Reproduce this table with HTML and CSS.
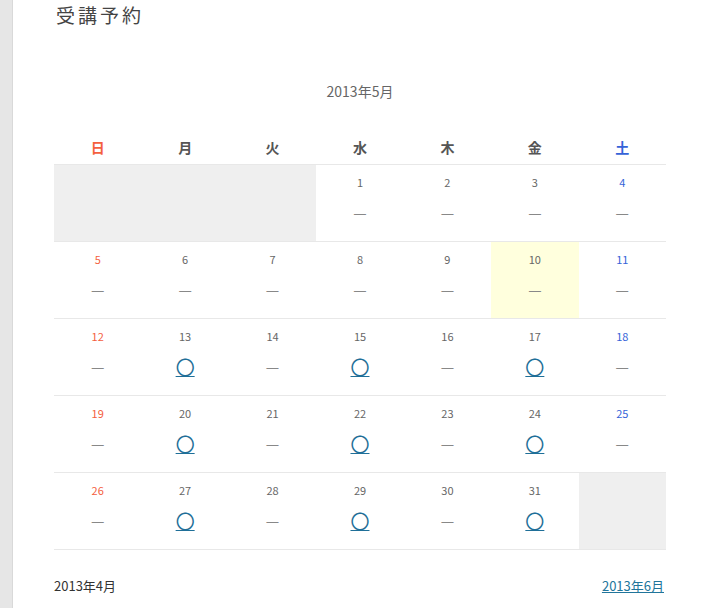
FILE: index.html
```html
<!DOCTYPE html>
<html lang="ja">
<head>
<meta charset="utf-8">
<title>受講予約</title>
<link rel="stylesheet" href="styles.css">
</head>
<body>
<div class="sidebar"></div>
<main class="main">
  <h1 class="title">受講予約</h1>
  <div class="caption">2013年5月</div>
  <div class="cal">
    <div class="wd sun">日</div>
    <div class="wd">月</div>
    <div class="wd">火</div>
    <div class="wd">水</div>
    <div class="wd">木</div>
    <div class="wd">金</div>
    <div class="wd sat">土</div>

    <div class="day empty"></div>
    <div class="day empty"></div>
    <div class="day empty"></div>
    <div class="day"><div class="num">1</div><div class="mark">—</div></div>
    <div class="day"><div class="num">2</div><div class="mark">—</div></div>
    <div class="day"><div class="num">3</div><div class="mark">—</div></div>
    <div class="day sat"><div class="num">4</div><div class="mark">—</div></div>

    <div class="day sun"><div class="num">5</div><div class="mark">—</div></div>
    <div class="day"><div class="num">6</div><div class="mark">—</div></div>
    <div class="day"><div class="num">7</div><div class="mark">—</div></div>
    <div class="day"><div class="num">8</div><div class="mark">—</div></div>
    <div class="day"><div class="num">9</div><div class="mark">—</div></div>
    <div class="day today"><div class="num">10</div><div class="mark">—</div></div>
    <div class="day sat"><div class="num">11</div><div class="mark">—</div></div>

    <div class="day sun"><div class="num">12</div><div class="mark">—</div></div>
    <div class="day"><div class="num">13</div><div class="mark"><a class="ok" href="#">〇</a></div></div>
    <div class="day"><div class="num">14</div><div class="mark">—</div></div>
    <div class="day"><div class="num">15</div><div class="mark"><a class="ok" href="#">〇</a></div></div>
    <div class="day"><div class="num">16</div><div class="mark">—</div></div>
    <div class="day"><div class="num">17</div><div class="mark"><a class="ok" href="#">〇</a></div></div>
    <div class="day sat"><div class="num">18</div><div class="mark">—</div></div>

    <div class="day sun"><div class="num">19</div><div class="mark">—</div></div>
    <div class="day"><div class="num">20</div><div class="mark"><a class="ok" href="#">〇</a></div></div>
    <div class="day"><div class="num">21</div><div class="mark">—</div></div>
    <div class="day"><div class="num">22</div><div class="mark"><a class="ok" href="#">〇</a></div></div>
    <div class="day"><div class="num">23</div><div class="mark">—</div></div>
    <div class="day"><div class="num">24</div><div class="mark"><a class="ok" href="#">〇</a></div></div>
    <div class="day sat"><div class="num">25</div><div class="mark">—</div></div>

    <div class="day sun"><div class="num">26</div><div class="mark">—</div></div>
    <div class="day"><div class="num">27</div><div class="mark"><a class="ok" href="#">〇</a></div></div>
    <div class="day"><div class="num">28</div><div class="mark">—</div></div>
    <div class="day"><div class="num">29</div><div class="mark"><a class="ok" href="#">〇</a></div></div>
    <div class="day"><div class="num">30</div><div class="mark">—</div></div>
    <div class="day"><div class="num">31</div><div class="mark"><a class="ok" href="#">〇</a></div></div>
    <div class="day empty"></div>
  </div>
  <div class="pager">
    <span class="prev">2013年4月</span>
    <a class="next" href="#">2013年6月</a>
  </div>
</main>
</body>
</html>
```

FILE: styles.css
```css
html, body {
  margin: 0;
  padding: 0;
  background: #fff;
}
body {
  display: flex;
  min-height: 608px;
  font-family: "Noto Sans CJK JP", "Noto Sans", sans-serif;
  color: #444;
}
.sidebar {
  width: 12px;
  background: #e6e6e6;
  border-right: 1px solid #d9d9d9;
  flex: none;
}
.main {
  width: 612px;
  padding: 0 42px 0 41px;
}
.title {
  margin: 0;
  padding-left: 2px;
  font-size: 19px;
  font-weight: normal;
  line-height: 30px;
  letter-spacing: 3px;
  color: #444;
}
.caption {
  margin-top: 51px;
  line-height: 20px;
  font-size: 14px;
  text-align: center;
  color: #666;
}
.cal {
  margin-top: 30px;
  display: grid;
  grid-template-columns: repeat(7, 1fr);
}
.wd {
  height: 32px;
  padding-bottom: 1px;
  border-bottom: 1px solid #e8e8e8;
  display: flex;
  align-items: center;
  justify-content: center;
  font-size: 14px;
  font-weight: bold;
  color: #555;
}
.day {
  height: 76px;
  border-bottom: 1px solid #e8e8e8;
  text-align: center;
  color: #666;
}
.day.empty {
  background: #efefef;
}
.day.today {
  background: #ffffdd;
}
.sun { color: #f4603e; }
.sat { color: #3563d8; }
.num {
  padding-top: 9px;
  font-size: 11px;
  line-height: 16px;
}
.mark {
  margin-top: 11px;
  line-height: 24px;
  font-size: 15px;
  color: #888;
}
.ok {
  font-size: 19px;
  color: #1f6f98;
  text-decoration: underline;
}
.pager {
  margin-top: 26px;
  display: flex;
  justify-content: space-between;
  line-height: 20px;
  font-size: 13px;
  color: #333;
  padding-right: 2px;
}
.next {
  color: #21759b;
  text-decoration: underline;
}
```
